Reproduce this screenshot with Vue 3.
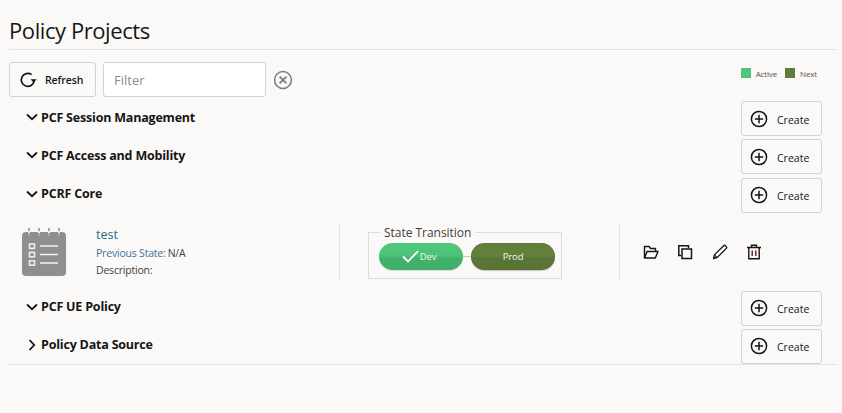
<script setup>
const before = ['PCF Session Management', 'PCF Access and Mobility', 'PCRF Core']
const after = [
  { name: 'PCF UE Policy', open: true },
  { name: 'Policy Data Source', open: false }
]
</script>

<template>
  <div class="page">
    <h1 class="title">Policy Projects</h1>
    <div class="toolbar">
      <button class="btn refresh">
        <svg width="18" height="18" viewBox="0 0 18 18" fill="none" stroke="#161513" stroke-width="1.7">
          <path d="M15.2 10.2A6.5 6.5 0 1 1 12.6 3.6" />
          <path d="M11.6 8.2h6l-3 3.6z" fill="#161513" stroke="none" />
        </svg>
        <span>Refresh</span>
      </button>
      <input class="filter" placeholder="Filter" />
      <svg class="clear" width="20" height="20" viewBox="0 0 20 20" fill="none" stroke="#7d7b78" stroke-width="1.5">
        <circle cx="10" cy="10" r="8.4" />
        <path d="M6.6 6.6l6.8 6.8M13.4 6.6l-6.8 6.8" stroke-width="1.7" />
      </svg>
      <div class="legend">
        <i class="swatch active"></i><span>Active</span>
        <i class="swatch next"></i><span>Next</span>
      </div>
    </div>

    <div v-for="name in before" :key="name" class="row">
      <svg class="chev" width="12" height="12" viewBox="0 0 12 12" fill="none" stroke="#161513" stroke-width="1.8">
        <path d="M1 3.5L6 8.2l5-4.7" />
      </svg>
      <span class="row-name">{{ name }}</span>
      <button class="btn create">
        <svg width="18" height="18" viewBox="0 0 18 18" fill="none" stroke="#161513" stroke-width="1.5">
          <circle cx="9" cy="9" r="7.6" />
          <path d="M9 4.8v8.4M4.8 9h8.4" />
        </svg>
        <span>Create</span>
      </button>
    </div>

    <div class="detail">
      <svg class="note" width="44" height="48" viewBox="0 0 44 48">
        <rect x="0" y="4" width="44" height="44" rx="4" fill="#8f8f8f" />
        <g stroke="#a9a9a9" stroke-width="2">
          <path d="M7 0v8M17 0v8M27 0v8M37 0v8" />
        </g>
        <g stroke="#f4f4f4" stroke-width="2">
          <path d="M7 3v2M17 3v2M27 3v2M37 3v2" />
        </g>
        <g fill="none" stroke="#f2f2f2" stroke-width="1.5">
          <rect x="7.5" y="16" width="5" height="4.4" />
          <rect x="7.5" y="24.4" width="5" height="4.4" />
          <rect x="7.5" y="32.8" width="5" height="4.4" />
          <path d="M18 18h18M18 26.5h18M18 35h18" />
        </g>
      </svg>
      <div class="info">
        <a class="name">test</a>
        <div class="line"><span class="label">Previous State:</span><span>N/A</span></div>
        <div class="line">Description:</div>
      </div>
      <div class="transition">
        <fieldset class="states">
          <legend>State Transition</legend>
          <div class="pills">
            <div class="pill dev">
              <svg width="17" height="13" viewBox="0 0 17 13" fill="none" stroke="#fff" stroke-width="1.8">
                <path d="M1 6.5l5 5L16 1" />
              </svg>
              <span>Dev</span>
            </div>
            <div class="connector"></div>
            <div class="pill prod"><span>Prod</span></div>
          </div>
        </fieldset>
      </div>
      <div class="actions">
        <svg width="16" height="16" viewBox="0 0 16 16" fill="none" stroke="#161513" stroke-width="1.4" stroke-linejoin="round">
          <path d="M1.5 14V2.5h4.6l1.4 2h5v3" />
          <path d="M1.5 14h10.8l2.7-6.5H4z" />
        </svg>
        <svg width="16" height="16" viewBox="0 0 16 16" fill="none" stroke="#161513" stroke-width="1.5">
          <path d="M4 11.5H1.8V1.8h9.7V4" />
          <rect x="5" y="5" width="9.5" height="9.5" />
        </svg>
        <svg width="16" height="16" viewBox="0 0 16 16" fill="none" stroke="#161513" stroke-width="1.3" stroke-linejoin="round">
          <path d="M1.5 14.5l.9-3.6L11.6 1.7a1.3 1.3 0 0 1 1.8 0l.9.9a1.3 1.3 0 0 1 0 1.8L5.1 13.6z" />
          <path d="M2.4 10.9l2.7 2.7" />
        </svg>
        <svg width="16" height="16" viewBox="0 0 16 16" fill="none" stroke="#161513" stroke-width="1.4">
          <path d="M1 3.5h14M5.5 3.5V1.3h5v2.2M2.8 3.5v11.2h10.4V3.5" />
          <path d="M6.2 6.5v5.5M9.8 6.5v5.5" stroke="#5c1f1f" />
        </svg>
      </div>
    </div>

    <div v-for="item in after" :key="item.name" class="row">
      <svg class="chev" width="12" height="12" viewBox="0 0 12 12" fill="none" stroke="#161513" stroke-width="1.8">
        <path v-if="item.open" d="M1 3.5L6 8.2l5-4.7" />
        <path v-else d="M3.5 1L8.2 6l-4.7 5" />
      </svg>
      <span class="row-name">{{ item.name }}</span>
      <button class="btn create">
        <svg width="18" height="18" viewBox="0 0 18 18" fill="none" stroke="#161513" stroke-width="1.5">
          <circle cx="9" cy="9" r="7.6" />
          <path d="M9 4.8v8.4M4.8 9h8.4" />
        </svg>
        <span>Create</span>
      </button>
    </div>
    <div class="end-rule"></div>
  </div>
</template>

<style>
html, body { background: #fbf9f8; }
</style>

<style scoped>
.page {
  box-sizing: border-box;
  width: 842px;
  height: 413px;
  padding: 0 5px 0 9px;
  background: #fbf9f8;
  color: #161513;
  font-family: "Open Sans", "Noto Sans", sans-serif;
  overflow: hidden;
}
.title {
  margin: 0;
  height: 49px;
  border-bottom: 1px solid #e6e4e2;
  font-size: 22px;
  line-height: 60px;
  font-weight: 400;
  white-space: nowrap;
  letter-spacing: -0.42px;
}
.toolbar {
  display: flex;
  align-items: center;
  margin-top: 12px;
  height: 35px;
}
.btn {
  display: flex;
  align-items: center;
  box-sizing: border-box;
  height: 35px;
  background: #fbf9f8;
  border: 1px solid #d4d2cf;
  border-radius: 3px;
  color: #161513;
  font-family: inherit;
  padding: 0;
}
.refresh {
  width: 87px;
  padding-left: 9px;
  gap: 8px;
  font-size: 10.5px;
  font-weight: 600;
  letter-spacing: -0.1px;
}
.filter {
  box-sizing: border-box;
  width: 163px;
  height: 35px;
  margin-left: 7px;
  padding: 0 10px;
  background: #fff;
  border: 1px solid #d4d2cf;
  border-radius: 3px;
  font-family: inherit;
  font-size: 13px;
  outline: none;
}
.filter::placeholder { color: #8b8a88; opacity: 1; }
.clear { margin-left: 7px; }
.legend {
  display: flex;
  align-items: center;
  margin-left: auto;
  margin-right: 20px;
  margin-top: -13px;
  font-size: 8px;
  letter-spacing: -0.15px;
  color: #55524f;
}
.swatch {
  width: 10px;
  height: 10px;
  margin-right: 5px;
}
.swatch.active { background: #4fc67b; }
.swatch.next { background: #5f7d3a; margin-left: 8px; }
.row {
  display: flex;
  align-items: center;
  height: 35px;
  margin-top: 3.3px;
  padding-left: 17px;
  padding-right: 15px;
}
.toolbar + .row { margin-top: 4px; }
.chev { flex: none; margin-right: 3px; margin-top: -3px; }
.row-name {
  font-size: 12.5px;
  font-weight: 700;
  letter-spacing: -0.2px;
  margin-top: -2.8px;
}
.create {
  width: 81px;
  margin-left: auto;
  padding-left: 8px;
  gap: 9px;
  font-size: 10.5px;
  font-weight: 500;
}
.create span { margin-top: 2px; }
.detail {
  display: flex;
  align-items: center;
  height: 78px;
  padding-left: 13px;
}
.detail + .row { margin-top: 0; }
.note { flex: none; }
.info {
  width: 243px;
  margin-left: 30px;
  font-size: 10.5px;
  letter-spacing: -0.2px;
  line-height: 17px;
  color: #3f3d3a;
}
.name {
  display: block;
  color: #2c6b8f;
  font-size: 12.5px;
  letter-spacing: 0;
  line-height: 20px;
}
.label { color: #3b7398; margin-right: 2px; }
.transition {
  box-sizing: border-box;
  width: 281px;
  height: 56px;
  padding-left: 28px;
  border-left: 1px solid #e6e4e2;
  border-right: 1px solid #e6e4e2;
  flex: none;
}
.states {
  box-sizing: border-box;
  width: 193px;
  margin: 1px 0 0;
  padding: 0 6px 7px 10px;
  border: 1px solid #dedcda;
  height: 54px;
}
.states legend {
  padding: 0 4px;
  margin-left: 1px;
  font-size: 12px;
  letter-spacing: -0.03px;
  line-height: 16px;
  color: #3f3d3a;
}
.pills {
  display: flex;
  align-items: center;
  margin-top: 2px;
}
.pill {
  box-sizing: border-box;
  display: flex;
  align-items: center;
  justify-content: center;
  gap: 1px;
  width: 84px;
  height: 27px;
  border-radius: 14px;
  color: #f1f6ee;
  font-size: 9.5px;
  letter-spacing: -0.1px;
  flex: none;
}
.dev {
  padding-right: 4px;
  background: linear-gradient(#50c87c 0%, #4cc278 48%, #42b26c 56%, #3eae69 100%);
  box-shadow: 0 1px 1px rgba(0,0,0,.12);
}
.prod {
  background: linear-gradient(#607f3b 0%, #628239 48%, #587535 56%, #587535 100%);
  box-shadow: inset 0 0 1px rgba(0,0,0,.35), 0 1px 1px rgba(0,0,0,.2);
}
.connector {
  width: 8px;
  height: 1px;
  background: #c9c7c4;
  flex: none;
}
.actions {
  display: flex;
  align-items: center;
  gap: 18.3px;
  margin-left: 23px;
}
.end-rule {
  height: 1px;
  background: #e6e4e2;
}
</style>
